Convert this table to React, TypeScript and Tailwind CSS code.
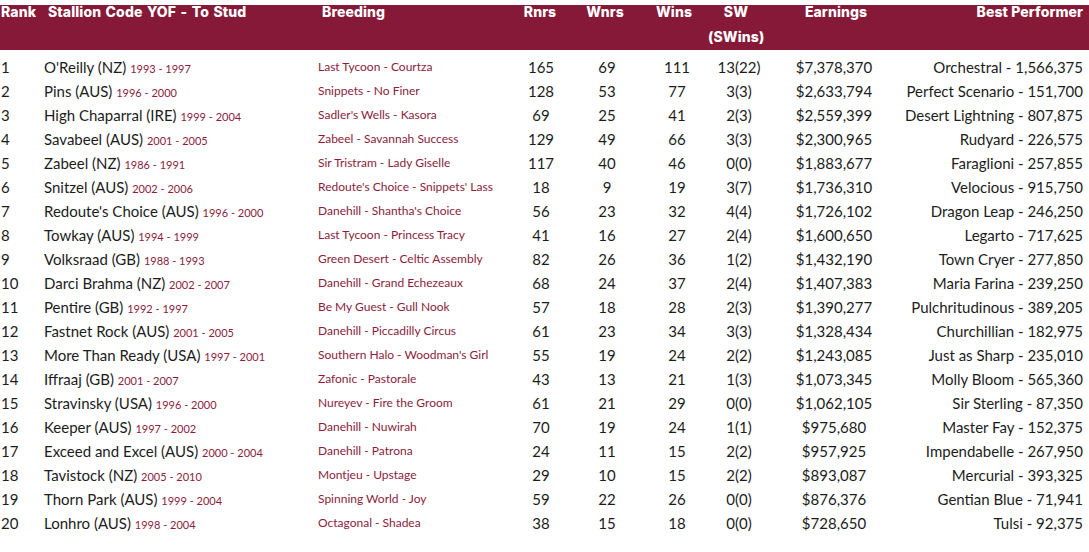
const rows: [string, string, string, string, number, number, number, string, string, string][] = [
  ['1', "O'Reilly (NZ)", '1993 - 1997', 'Last Tycoon - Courtza', 165, 69, 111, '13(22)', '$7,378,370', 'Orchestral - 1,566,375'],
  ['2', 'Pins (AUS)', '1996 - 2000', 'Snippets - No Finer', 128, 53, 77, '3(3)', '$2,633,794', 'Perfect Scenario - 151,700'],
  ['3', 'High Chaparral (IRE)', '1999 - 2004', "Sadler's Wells - Kasora", 69, 25, 41, '2(3)', '$2,559,399', 'Desert Lightning - 807,875'],
  ['4', 'Savabeel (AUS)', '2001 - 2005', 'Zabeel - Savannah Success', 129, 49, 66, '3(3)', '$2,300,965', 'Rudyard - 226,575'],
  ['5', 'Zabeel (NZ)', '1986 - 1991', 'Sir Tristram - Lady Giselle', 117, 40, 46, '0(0)', '$1,883,677', 'Faraglioni - 257,855'],
  ['6', 'Snitzel (AUS)', '2002 - 2006', "Redoute's Choice - Snippets' Lass", 18, 9, 19, '3(7)', '$1,736,310', 'Velocious - 915,750'],
  ['7', "Redoute's Choice (AUS)", '1996 - 2000', "Danehill - Shantha's Choice", 56, 23, 32, '4(4)', '$1,726,102', 'Dragon Leap - 246,250'],
  ['8', 'Towkay (AUS)', '1994 - 1999', 'Last Tycoon - Princess Tracy', 41, 16, 27, '2(4)', '$1,600,650', 'Legarto - 717,625'],
  ['9', 'Volksraad (GB)', '1988 - 1993', 'Green Desert - Celtic Assembly', 82, 26, 36, '1(2)', '$1,432,190', 'Town Cryer - 277,850'],
  ['10', 'Darci Brahma (NZ)', '2002 - 2007', 'Danehill - Grand Echezeaux', 68, 24, 37, '2(4)', '$1,407,383', 'Maria Farina - 239,250'],
  ['11', 'Pentire (GB)', '1992 - 1997', 'Be My Guest - Gull Nook', 57, 18, 28, '2(3)', '$1,390,277', 'Pulchritudinous - 389,205'],
  ['12', 'Fastnet Rock (AUS)', '2001 - 2005', 'Danehill - Piccadilly Circus', 61, 23, 34, '3(3)', '$1,328,434', 'Churchillian - 182,975'],
  ['13', 'More Than Ready (USA)', '1997 - 2001', "Southern Halo - Woodman's Girl", 55, 19, 24, '2(2)', '$1,243,085', 'Just as Sharp - 235,010'],
  ['14', 'Iffraaj (GB)', '2001 - 2007', 'Zafonic - Pastorale', 43, 13, 21, '1(3)', '$1,073,345', 'Molly Bloom - 565,360'],
  ['15', 'Stravinsky (USA)', '1996 - 2000', 'Nureyev - Fire the Groom', 61, 21, 29, '0(0)', '$1,062,105', 'Sir Sterling - 87,350'],
  ['16', 'Keeper (AUS)', '1997 - 2002', 'Danehill - Nuwirah', 70, 19, 24, '1(1)', '$975,680', 'Master Fay - 152,375'],
  ['17', 'Exceed and Excel (AUS)', '2000 - 2004', 'Danehill - Patrona', 24, 11, 15, '2(2)', '$957,925', 'Impendabelle - 267,950'],
  ['18', 'Tavistock (NZ)', '2005 - 2010', 'Montjeu - Upstage', 29, 10, 15, '2(2)', '$893,087', 'Mercurial - 393,325'],
  ['19', 'Thorn Park (AUS)', '1999 - 2004', 'Spinning World - Joy', 59, 22, 26, '0(0)', '$876,376', 'Gentian Blue - 71,941'],
  ['20', 'Lonhro (AUS)', '1998 - 2004', 'Octagonal - Shadea', 38, 15, 18, '0(0)', '$728,650', 'Tulsi - 92,375'],
];

export default function App() {
  return (
    <div className="w-[1089px] h-[552px] bg-white overflow-hidden font-['Lato',sans-serif] text-[#1c1c1c]">
      {/* header band */}
      <div className="mt-[5px] h-[45px] bg-[#861937] text-white font-['Inter',sans-serif] font-extrabold text-[14px] leading-[14px] tracking-[0.1px]">
        <div className="flex">
          <div className="w-[44px] pl-[1px]">Rank</div>
          <div className="w-[274px] pl-[4px] whitespace-nowrap [word-spacing:1.3px]">Stallion Code YOF - To Stud</div>
          <div className="w-[192px] pl-[4px]">Breeding</div>
          <div className="w-[60px] text-center">Rnrs</div>
          <div className="w-[70px] text-center">Wnrs</div>
          <div className="w-[68px] text-center">Wins</div>
          <div className="w-[56px] text-center">
            SW
            <div className="mt-[11px]">(SWins)</div>
          </div>
          <div className="w-[144px] text-center">Earnings</div>
          <div className="flex-1 text-right pr-[6px] whitespace-nowrap">Best Performer</div>
        </div>
      </div>
      {/* rows */}
      <div className="pt-[5px]">
        {rows.map((r) => (
          <div key={r[0]} className="flex items-center h-[24px] text-[15px]">
            <div className="w-[44px] pl-[1px]">{r[0]}</div>
            <div className="w-[274px] whitespace-nowrap">
              {r[1]} <span className="text-[11px] text-[#8b1c3e]">{r[2]}</span>
            </div>
            <div className="w-[192px] whitespace-nowrap text-[12px] text-[#8b1c3e]">{r[3]}</div>
            <div className="w-[62px] text-center">{r[4]}</div>
            <div className="w-[70px] text-center">{r[5]}</div>
            <div className="w-[70px] text-center">{r[6]}</div>
            <div className="w-[54px] text-center">{r[7]}</div>
            <div className="w-[136px] text-center">{r[8]}</div>
            <div className="flex-1 text-right pr-[6px] whitespace-nowrap">{r[9]}</div>
          </div>
        ))}
      </div>
    </div>
  );
}
